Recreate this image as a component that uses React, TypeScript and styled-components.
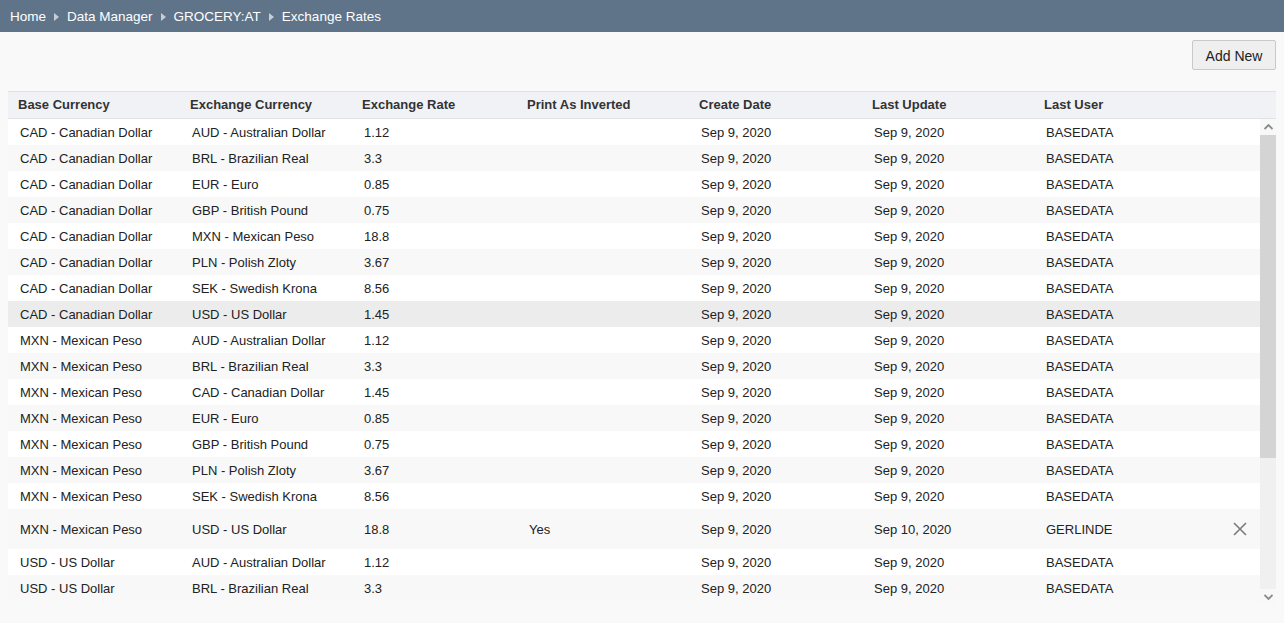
import styled, {createGlobalStyle} from "styled-components";

const GlobalStyle = createGlobalStyle`
  html, body {
    margin: 0;
    padding: 0;
    background: #f9f9f9;
    font-family: "Liberation Sans", Arial, sans-serif;
    color: #222;
  }
`

const Page = styled.div`
  width: 1284px;
  height: 623px;
  overflow: hidden;
  display: flex;
  flex-direction: column;
`

const TopBar = styled.nav`
  height: 32px;
  box-sizing: border-box;
  padding: 2px 10px 0 10px;
  background: #5f7489;
  display: flex;
  align-items: center;
  gap: 8px;
  font-size: 13.5px;
  color: #fff;
`

const Crumb = styled.span`
  color: #fff;
  line-height: 1;
`

const Arrow = styled.span`
  width: 0;
  height: 0;
  border-top: 4px solid transparent;
  border-bottom: 4px solid transparent;
  border-left: 5px solid #c5ced7;
`

const Content = styled.main`
  padding: 8px 8px 0 8px;
  display: flex;
  flex-direction: column;
`

const Toolbar = styled.div`
  display: flex;
  justify-content: flex-end;
  height: 30px;
  margin-bottom: 21px;
`

const Button = styled.button`
  width: 84px;
  height: 30px;
  background: #efefef;
  border: 1px solid #c9c9c9;
  border-radius: 2px;
  font-family: "Liberation Sans", Arial, sans-serif;
  font-size: 14px;
  color: #222;
  padding: 1px 0 0 0;
`

const COLS = "172px 172px 165px 172px 173px 172px 172px 1fr"

const HeadRow = styled.div`
  display: grid;
  grid-template-columns: ${COLS};
  height: 26px;
  align-items: center;
  background: #f1f2f5;
  border-top: 1px solid #e1e2e6;
  border-bottom: 1px solid #e1e2e6;
`

const HeadCell = styled.div`
  padding-left: 10px;
  padding-bottom: 1px;
  font-size: 13px;
  font-weight: bold;
  color: #333;
`

const BodyWrap = styled.div`
  display: flex;
  height: 486px;
`

const Rows = styled.div`
  flex: 1;
  overflow: hidden;
  display: flex;
  flex-direction: column;
`

const Row = styled.div<{ $alt: boolean; $hover?: boolean; $tall?: boolean }>`
  display: grid;
  grid-template-columns: ${COLS};
  align-items: center;
  flex: none;
  height: ${p => (p.$tall ? "40px" : "26px")};
  background: ${p => (p.$hover ? "#ececec" : p.$alt ? "#f8f8f8" : "#ffffff")};
`

const Cell = styled.div`
  padding-left: 12px;
  font-size: 13px;
  color: #222;
  white-space: nowrap;
`

const ActionCell = styled.div`
  display: flex;
  justify-content: flex-end;
  padding-right: 13px;
  color: #7a7a7a;
`

const Scroll = styled.div`
  width: 16px;
  background: #f0f0f0;
  display: flex;
  flex-direction: column;
  align-items: center;
`

const ScrollBtn = styled.div`
  height: 16px;
  width: 16px;
  display: flex;
  align-items: center;
  justify-content: center;
  background: #f8f8f8;
`

const Thumb = styled.div`
  width: 16px;
  height: 323px;
  background: #d4d4d4;
`

const Spacer = styled.div`
  flex: 1;
`

interface RateRow {
    base: string
    exch: string
    rate: string
    inverted?: string
    created: string
    updated: string
    user: string
}

const CAD = "CAD - Canadian Dollar"
const MXN = "MXN - Mexican Peso"
const USD = "USD - US Dollar"

const mk = (base: string, exch: string, rate: string): RateRow => ({
    base, exch, rate, created: "Sep 9, 2020", updated: "Sep 9, 2020", user: "BASEDATA"
})

const rows: RateRow[] = [
    mk(CAD, "AUD - Australian Dollar", "1.12"),
    mk(CAD, "BRL - Brazilian Real", "3.3"),
    mk(CAD, "EUR - Euro", "0.85"),
    mk(CAD, "GBP - British Pound", "0.75"),
    mk(CAD, "MXN - Mexican Peso", "18.8"),
    mk(CAD, "PLN - Polish Zloty", "3.67"),
    mk(CAD, "SEK - Swedish Krona", "8.56"),
    mk(CAD, "USD - US Dollar", "1.45"),
    mk(MXN, "AUD - Australian Dollar", "1.12"),
    mk(MXN, "BRL - Brazilian Real", "3.3"),
    mk(MXN, "CAD - Canadian Dollar", "1.45"),
    mk(MXN, "EUR - Euro", "0.85"),
    mk(MXN, "GBP - British Pound", "0.75"),
    mk(MXN, "PLN - Polish Zloty", "3.67"),
    mk(MXN, "SEK - Swedish Krona", "8.56"),
    {base: MXN, exch: "USD - US Dollar", rate: "18.8", inverted: "Yes", created: "Sep 9, 2020", updated: "Sep 10, 2020", user: "GERLINDE"},
    mk(USD, "AUD - Australian Dollar", "1.12"),
    mk(USD, "BRL - Brazilian Real", "3.3"),
]

const headers = ["Base Currency", "Exchange Currency", "Exchange Rate", "Print As Inverted", "Create Date", "Last Update", "Last User", ""]

function App() {
    return <Page>
        <GlobalStyle/>
        <TopBar>
            <Crumb>Home</Crumb>
            <Arrow/>
            <Crumb>Data Manager</Crumb>
            <Arrow/>
            <Crumb>GROCERY:AT</Crumb>
            <Arrow/>
            <Crumb>Exchange Rates</Crumb>
        </TopBar>
        <Content>
            <Toolbar>
                <Button>Add New</Button>
            </Toolbar>
            <HeadRow>
                {headers.map((h, i) => <HeadCell key={i}>{h}</HeadCell>)}
            </HeadRow>
            <BodyWrap>
                <Rows>
                    {rows.map((r, i) => {
                        const tall = !!r.inverted
                        return <Row key={i} $alt={i % 2 === 1} $hover={i === 7} $tall={tall}>
                            <Cell>{r.base}</Cell>
                            <Cell>{r.exch}</Cell>
                            <Cell>{r.rate}</Cell>
                            <Cell>{r.inverted ?? ""}</Cell>
                            <Cell>{r.created}</Cell>
                            <Cell>{r.updated}</Cell>
                            <Cell>{r.user}</Cell>
                            {tall ? <ActionCell>
                                <svg width="14" height="14" viewBox="0 0 14 14">
                                    <path d="M1 1 L13 13 M13 1 L1 13" stroke="currentColor" strokeWidth="1.6"/>
                                </svg>
                            </ActionCell> : <div/>}
                        </Row>
                    })}
                </Rows>
                <Scroll>
                    <ScrollBtn>
                        <svg width="9" height="6" viewBox="0 0 9 6">
                            <path d="M0.5 5 L4.5 1 L8.5 5" fill="none" stroke="#8a8a8a" strokeWidth="1.8"/>
                        </svg>
                    </ScrollBtn>
                    <Thumb/>
                    <Spacer/>
                    <ScrollBtn>
                        <svg width="9" height="6" viewBox="0 0 9 6">
                            <path d="M0.5 1 L4.5 5 L8.5 1" fill="none" stroke="#8a8a8a" strokeWidth="1.8"/>
                        </svg>
                    </ScrollBtn>
                </Scroll>
            </BodyWrap>
        </Content>
    </Page>
}

export default App;
